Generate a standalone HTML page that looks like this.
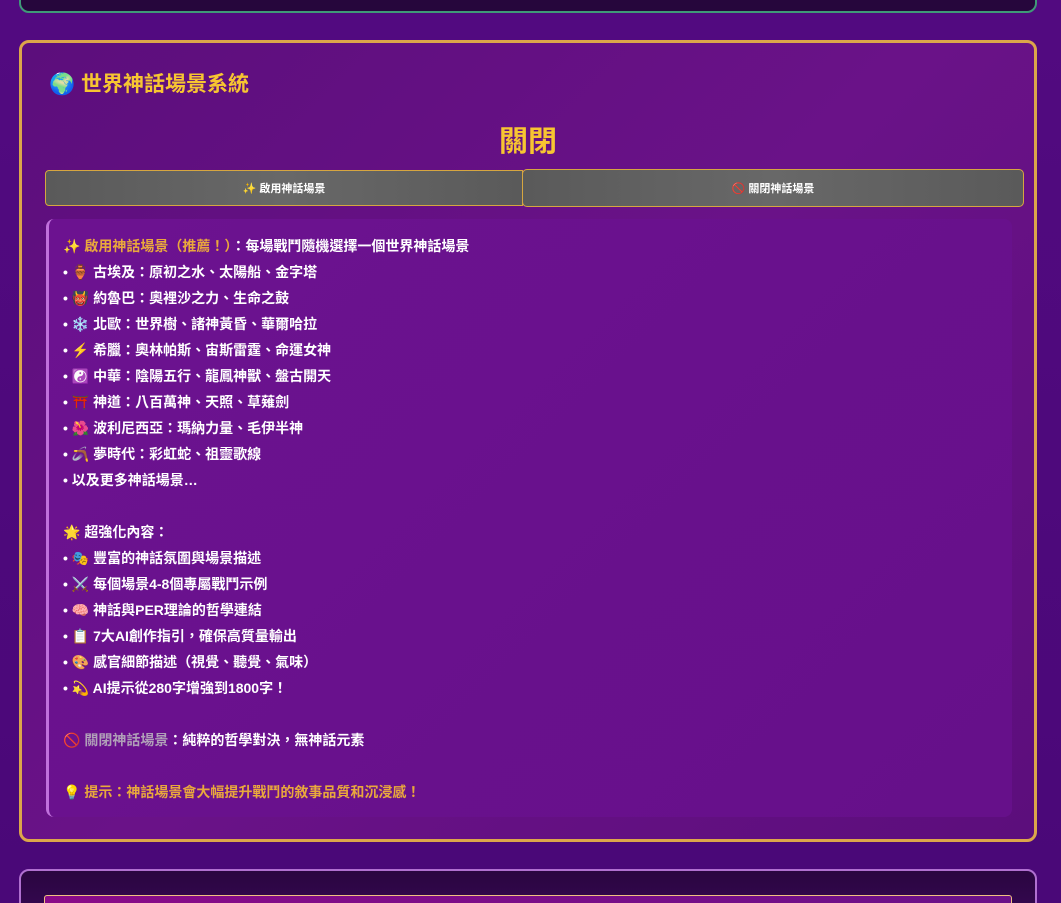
<!DOCTYPE html>
<html style="overflow:hidden;height:903px"><head><meta charset="utf-8"><style>
html,body{overflow:hidden}
body{margin:0;width:1061px;height:903px;background:linear-gradient(180deg,#520a80,#4a0878);font-family:"Liberation Sans","Noto Sans CJK TC",sans-serif;position:relative}
.top{position:absolute;left:19px;top:-20px;width:1014px;height:29px;background:#26063c;border:2px solid #3f9a78;border-radius:10px}
.card{position:absolute;left:19px;top:40px;width:1012px;height:796px;border:3px solid #dca64a;border-radius:10px;background:linear-gradient(135deg,#5c0e7c,#6a1288 50%,#5c0e7c)}
h2{position:absolute;left:27px;top:25px;margin:0;font-size:21px;color:#f7c531;font-weight:bold}
.state{position:absolute;left:0;width:100%;top:75px;text-align:center;font-size:29px;font-weight:bold;color:#f7c531}
.btn{position:absolute;top:127px;height:36px;background:linear-gradient(90deg,#5a5a5a,#686868,#5a5a5a);border:1px solid #d6a640;color:#fff;font-size:11px;font-weight:bold;text-align:center;line-height:36px;box-sizing:border-box}
.b1{left:23px;width:478px;border-radius:4px 0 0 4px}
.b2{left:500px;width:502px;height:38px;line-height:38px;top:126px;border-radius:5px}
.box{position:absolute;left:24px;top:176px;width:966px;height:598px;background:linear-gradient(135deg,#6c1290,#66108a);border-left:3px solid #c070dc;border-radius:8px;box-sizing:border-box;padding:14px 0 0 14px;color:#fff;font-size:14px;font-weight:bold;line-height:26px}
.g{color:#e9a83c}.gr{color:#b0a0b8}
.bot{position:absolute;left:19px;top:869px;width:1014px;height:60px;background:linear-gradient(#2a0640,#3a0858);border:2px solid #b070d0;border-radius:10px;overflow:hidden}
.bot div{position:absolute;left:23px;top:24px;width:966px;height:40px;background:linear-gradient(90deg,#8a0a88,#6a1088);border:1px solid #f0c080;border-radius:3px}
</style></head><body>
<div class="top"></div>
<div class="card">
<h2>🌍 世界神話場景系統</h2>
<div class="state">關閉</div>
<div class="btn b1">✨ 啟用神話場景</div>
<div class="btn b2">🚫 關閉神話場景</div>
<div class="box">
<div><span class="g">✨ 啟用神話場景（推薦！）</span>：每場戰鬥隨機選擇一個世界神話場景</div>
<div>• 🏺 古埃及：原初之水、太陽船、金字塔</div>
<div>• 👹 約魯巴：奧裡沙之力、生命之鼓</div>
<div>• ❄️ 北歐：世界樹、諸神黃昏、華爾哈拉</div>
<div>• ⚡ 希臘：奧林帕斯、宙斯雷霆、命運女神</div>
<div>• ☯️ 中華：陰陽五行、龍鳳神獸、盤古開天</div>
<div>• ⛩️ 神道：八百萬神、天照、草薙劍</div>
<div>• 🌺 波利尼西亞：瑪納力量、毛伊半神</div>
<div>• 🪃 夢時代：彩虹蛇、祖靈歌線</div>
<div>• 以及更多神話場景…</div>
<div>&nbsp;</div>
<div>🌟 超強化內容：</div>
<div>• 🎭 豐富的神話氛圍與場景描述</div>
<div>• ⚔️ 每個場景4-8個專屬戰鬥示例</div>
<div>• 🧠 神話與PER理論的哲學連結</div>
<div>• 📋 7大AI創作指引，確保高質量輸出</div>
<div>• 🎨 感官細節描述（視覺、聽覺、氣味）</div>
<div>• 💫 AI提示從280字增強到1800字！</div>
<div>&nbsp;</div>
<div><span class="gr">🚫 關閉神話場景</span>：純粹的哲學對決，無神話元素</div>
<div>&nbsp;</div>
<div class="g">💡 提示：神話場景會大幅提升戰鬥的敘事品質和沉浸感！</div>
</div>
</div>
<div class="bot"><div></div></div>
</body></html>
